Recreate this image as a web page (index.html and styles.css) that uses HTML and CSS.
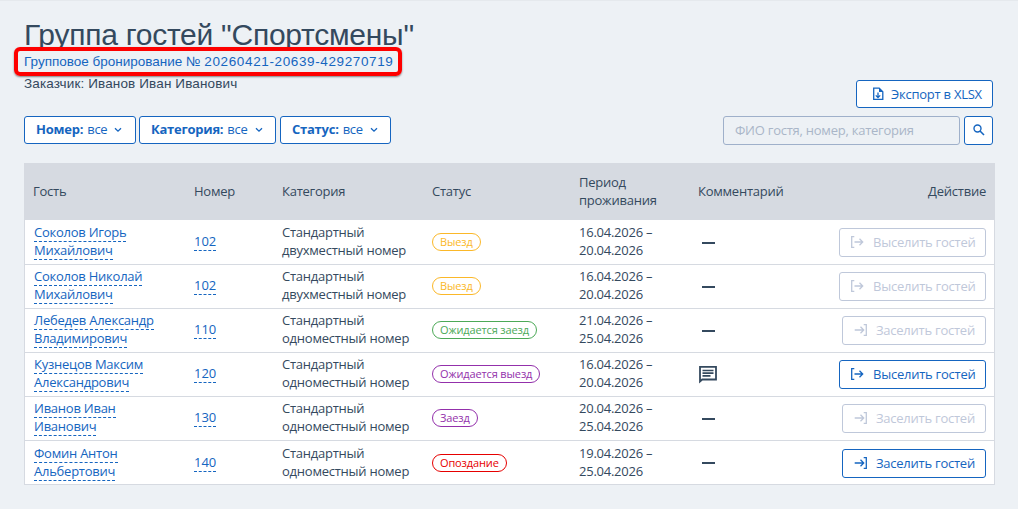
FILE: index.html
```html
<!DOCTYPE html>
<html lang="ru">
<head>
<meta charset="utf-8">
<title>Группа гостей</title>
<link rel="stylesheet" href="styles.css">
</head>
<body>
<svg width="0" height="0" class="defs">
  <symbol id="chev" viewBox="0 0 8 6"><path d="M1 1.200l3 3 3-3" fill="none" stroke="currentColor" stroke-width="1.300"/></symbol>
  <symbol id="out" viewBox="0 0 14 14"><path d="M4.300 1.600H1.700v10.800h2.600M4.500 7h8M9.500 3.800L12.700 7l-3.200 3.200" fill="none" stroke="currentColor" stroke-width="1.300"/></symbol>
  <symbol id="in" viewBox="0 0 14 14"><path d="M9.700 1.600h2.600v10.800h-2.600M.7 7h9M6.500 3.800L9.700 7l-3.200 3.200" fill="none" stroke="currentColor" stroke-width="1.300"/></symbol>
</svg>
<main class="page">
  <header class="head">
    <div>
      <h1 class="title">Группа гостей "Спортсмены"</h1>
      <div class="booking"><a class="booking-link">Групповое бронирование № <span class="num">20260421-20639-429270719</span></a></div>
      <div class="customer">Заказчик: Иванов Иван Иванович</div>
    </div>
    <button class="btn export"><svg width="12" height="14" viewBox="0 0 12 14"><path d="M1.700 1.200h5.500l3.600 3.600v7.500H1.700z" fill="none" stroke="currentColor" stroke-width="1.300"/><path d="M7 1v4h4z" fill="currentColor"/><path d="M6 5.500v5M3.800 8.400L6 10.600l2.200-2.200" fill="none" stroke="currentColor" stroke-width="1.300"/></svg>Экспорт в XLSX</button>
  </header>
  <div class="filters">
    <button class="btn filter f1"><b>Номер:</b> все<svg width="8" height="6"><use href="#chev"/></svg></button>
    <button class="btn filter f2"><b>Категория:</b> все<svg width="8" height="6"><use href="#chev"/></svg></button>
    <button class="btn filter f3"><b>Статус:</b> все<svg width="8" height="6"><use href="#chev"/></svg></button>
    <input class="search" placeholder="ФИО гостя, номер, категория">
    <button class="btn find"><svg width="12" height="12" viewBox="0 0 12 12"><circle cx="4.500" cy="4.500" r="3.500" fill="none" stroke="currentColor" stroke-width="1.400"/><path d="M7 7l4 4" stroke="currentColor" stroke-width="1.600"/></svg></button>
  </div>
  <section class="table">
    <div class="row thead"><div>Гость</div><div>Номер</div><div>Категория</div><div>Статус</div><div>Период<br>проживания</div><div>Комментарий</div><div class="act">Действие</div></div>
    <div class="row first"><div class="guest"><a class="link">Соколов Игорь<br>Михайлович</a></div><div><a class="link room">102</a></div><div>Стандартный<br>двухместный номер</div><div class="status"><span class="tag yellow">Выезд</span></div><div>16.04.2026 –<br>20.04.2026</div><div class="comment"><i class="dash"></i></div><div class="act"><button class="btn off"><svg width="14" height="14"><use href="#out"/></svg>Выселить гостей</button></div></div>
    <div class="row"><div class="guest"><a class="link">Соколов Николай<br>Михайлович</a></div><div><a class="link room">102</a></div><div>Стандартный<br>двухместный номер</div><div class="status"><span class="tag yellow">Выезд</span></div><div>16.04.2026 –<br>20.04.2026</div><div class="comment"><i class="dash"></i></div><div class="act"><button class="btn off"><svg width="14" height="14"><use href="#out"/></svg>Выселить гостей</button></div></div>
    <div class="row"><div class="guest"><a class="link">Лебедев Александр<br>Владимирович</a></div><div><a class="link room">110</a></div><div>Стандартный<br>одноместный номер</div><div class="status"><span class="tag green">Ожидается заезд</span></div><div>21.04.2026 –<br>25.04.2026</div><div class="comment"><i class="dash"></i></div><div class="act"><button class="btn off in"><svg width="14" height="14"><use href="#in"/></svg>Заселить гостей</button></div></div>
    <div class="row"><div class="guest"><a class="link">Кузнецов Максим<br>Александрович</a></div><div><a class="link room">120</a></div><div>Стандартный<br>одноместный номер</div><div class="status"><span class="tag purple">Ожидается выезд</span></div><div>16.04.2026 –<br>20.04.2026</div><div class="comment"><svg class="note" width="20" height="19" viewBox="0 0 20 19"><path d="M2 16.500V1.800h16v12.700H4.200z" fill="none" stroke="currentColor" stroke-width="1.800"/><path d="M4.500 5.500h11M4.500 8.200h11M4.500 10.900h8" stroke="currentColor" stroke-width="1.700"/></svg></div><div class="act"><button class="btn"><svg width="14" height="14"><use href="#out"/></svg>Выселить гостей</button></div></div>
    <div class="row"><div class="guest"><a class="link">Иванов Иван<br>Иванович</a></div><div><a class="link room">130</a></div><div>Стандартный<br>одноместный номер</div><div class="status"><span class="tag purple">Заезд</span></div><div>20.04.2026 –<br>25.04.2026</div><div class="comment"><i class="dash"></i></div><div class="act"><button class="btn off in"><svg width="14" height="14"><use href="#in"/></svg>Заселить гостей</button></div></div>
    <div class="row last"><div class="guest"><a class="link">Фомин Антон<br>Альбертович</a></div><div><a class="link room">140</a></div><div>Стандартный<br>одноместный номер</div><div class="status"><span class="tag red">Опоздание</span></div><div>19.04.2026 –<br>25.04.2026</div><div class="comment"><i class="dash"></i></div><div class="act"><button class="btn in"><svg width="14" height="14"><use href="#in"/></svg>Заселить гостей</button></div></div>
  </section>
</main>
</body>
</html>
```
FILE: styles.css
```css
* { box-sizing: border-box; }
body { margin: 0; background: #edf1f5; color: #34495e; font: 13px/18px "Open Sans", "Noto Sans", sans-serif; letter-spacing: -.24px; }
.defs { display: block; }
.page { height: 509px; padding: 18px 23px 0 24px; border-top: 1px solid #e5e9ed; overflow: hidden; }
.head { display: flex; justify-content: space-between; align-items: flex-end; height: 89px; padding-right: 2px; }
.head > div { height: 89px; }
.title { margin: 0; font: 400 30px/32px "Liberation Sans", Arial, sans-serif; letter-spacing: -.25px; height: 29px; white-space: nowrap; }
.booking { position: relative; width: 388px; height: 29px; margin: -1px 0 0 -10px; padding: 2px 6px; border: 4px solid #fe0000; border-radius: 6px; box-shadow: 0 1px 2px #0007; font: 13.500px/17px "Liberation Sans", Arial, sans-serif; letter-spacing: 0; white-space: nowrap; }
.booking-link { color: #1565c0; }
.num { letter-spacing: .62px; }
.customer { font: 13.500px/16px "Liberation Sans", Arial, sans-serif; letter-spacing: .13px; }
.btn { display: inline-flex; align-items: center; height: 29px; margin: 0; padding: 0 11px 1px; border: 1px solid #1565c0; border-radius: 3px; background: #fff; color: #1565c0; font: inherit; letter-spacing: inherit; white-space: nowrap; }
.btn svg { flex: none; }
.export { width: 137px; padding: 0 10px 1px 15px; height: 28px; gap: 7px; }
.filters { display: flex; height: 28px; gap: 4px; margin-top: 8px; padding-right: 2px; }
.filter { height: 28px; padding-bottom: 2px; }
.filter b { margin-right: 4px; font-weight: 700; }
.filter svg { margin: 2px 0 0 7px; }
.f1 { width: 112px; margin-right: -1px; }
.f2 { width: 137px; }
.f3 { width: 111px; }
.search { width: 237px; height: 29px; margin: 0 0 0 auto; padding: 0 11px 1px; border: 1px solid #9fb0ca; border-radius: 3px; background: transparent; font: inherit; letter-spacing: inherit; }
.search::placeholder { color: #aab6c8; opacity: 1; }
.find { width: 29px; padding: 0 0 1px 8px; }
.table { width: 971px; margin-top: 19px; border: 1px solid #d6dae1; border-width: 0 1px; background: #fff; }
.row { display: grid; grid-template-columns: 161px 88px 150px 147px 119px 1fr 152px; align-items: center; height: 44px; padding: 0 8px; border-bottom: 1px solid #d6dae1; white-space: nowrap; }
.row > div { padding-bottom: 3px; }
.row > .status { padding-bottom: 2px; }
.row > .comment, .row > .act { padding-bottom: 0; }
.first { height: 45px; padding-top: 1px; }
.last { padding-top: 1px; }
.row.thead { height: 57px; padding-bottom: 2px; background: #d6dae1; border: 0; }
.thead > div { padding-bottom: 0; }
.row > .guest { padding-left: 1px; }
.link { color: #1565c0; border-bottom: 1px dashed #1565c0; }
.room { letter-spacing: 0; }
.act { text-align: right; display: flex; justify-content: flex-end; }
.row .btn { width: 147px; padding: 0 10px 1px; gap: 9px; }
.row .in { width: 144px; padding-left: 11px; gap: 8px; }
.row .off { color: #bfc8da; border-color: #bfc8da; }
.tag { display: inline-block; height: 18px; padding: 0 7px; border: 1px solid; border-radius: 9px; font-size: 11px; letter-spacing: -.13px; line-height: 16px; vertical-align: middle; }
.yellow { color: #fbb829; }
.green { color: #4ca957; }
.purple { color: #9330ab; }
.red { color: #e60000; }
.dash { display: block; width: 13px; height: 2px; margin-left: 4px; background: #34495e; }
.note { display: block; }
```
